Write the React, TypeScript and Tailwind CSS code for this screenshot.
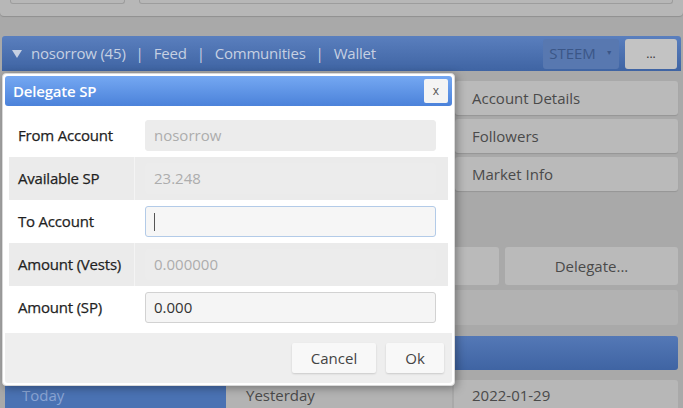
import React from 'react';

const font = { fontFamily: '"Open Sans", "Noto Sans", sans-serif' };

function SideButton({ label }: { label: string }) {
  return (
    <div className="flex h-[34px] items-center rounded-[3px] bg-[#bababa] px-[17px] text-[15px] text-[#4a4a4a] shadow-[0_1px_1px_rgba(0,0,0,0.12)]">
      {label}
    </div>
  );
}

function Row({
  label,
  value,
  shade,
  kind,
}: {
  label: string;
  value: string;
  shade?: boolean;
  kind: 'disabled' | 'focus' | 'normal';
}) {
  const input =
    kind === 'disabled'
      ? 'bg-[#ececec] text-[#adadad] border-[#ececec]'
      : kind === 'focus'
        ? 'bg-[#f6f6f6] text-[#333] border-[#b3cbe8]'
        : 'bg-[#f5f5f5] text-[#333] border-[#d2d2d2]';
  return (
    <div className={`grid grid-cols-[126px_1fr] ${shade ? 'bg-[#ebebeb]' : 'bg-white'}`}>
      <div className={`flex items-center pl-[9px] text-[15px] tracking-[-0.2px] text-[#1f1f1f] [-webkit-text-stroke:0.25px_#1f1f1f] ${shade ? 'border-r border-[#f4f4f4]' : ''}`}>
        {label}
      </div>
      <div className="py-[6px] pl-[10px] pr-[12px]">
        <div className={`flex h-[31px] items-center rounded-[3px] border px-[8px] text-[15px] ${input}`}>
          {kind === 'focus' ? <span className="h-[18px] w-px bg-[#555]" /> : value}
        </div>
      </div>
    </div>
  );
}

export default function App() {
  return (
    <div style={font} className="relative h-[408px] w-[683px] overflow-hidden bg-[#a9a9a9]">
      {/* page behind the dialog */}
      <div className="h-[16px] rounded-b-[4px] bg-[#b7b7b7] px-[3px] shadow-[0_1px_1px_rgba(0,0,0,0.15)]">
        <div className="flex h-[4px] gap-[14px] px-[7px]">
          <div className="w-[115px] rounded-b-[3px] border border-t-0 border-[#9d9d9d]" />
          <div className="flex-1 rounded-b-[3px] border border-t-0 border-[#9d9d9d]" />
        </div>
      </div>

      <div className="mx-[2px] mt-[20px] flex h-[35px] items-center justify-between rounded-t-[3px] bg-gradient-to-b from-[#5a7fbe] to-[#3f64a3] pl-[10px] pr-[4px]">
        <div className="flex items-center gap-[10px] text-[15px] tracking-[-0.2px] text-[#c6d0e2]">
          <span className="h-0 w-0 border-x-[5px] border-t-[8px] border-x-transparent border-t-[#c6d0e2]" />
          <span className="-ml-[1px]">nosorrow (45)</span>
          <span>|</span>
          <span>Feed</span>
          <span>|</span>
          <span>Communities</span>
          <span>|</span>
          <span>Wallet</span>
        </div>
        <div className="flex items-center gap-[6px]">
          <div className="flex h-[30px] w-[76px] items-center justify-center gap-[10px] rounded-[3px] bg-[#5878b0] text-[15px] text-[#3b5687]">
            <span>STEEM</span>
            <span className="text-[7px]">▼</span>
          </div>
          <div className="flex h-[30px] w-[52px] items-center justify-center rounded-[3px] bg-[#c3c3c3] text-[12px] text-[#333]">
            ...
          </div>
        </div>
      </div>

      <div className="grid grid-cols-[1fr_223px] gap-[6px] pl-[6px] pr-[5px]">
        <div />
        <div className="flex flex-col gap-[4px] pt-[10px]">
          <SideButton label="Account Details" />
          <SideButton label="Followers" />
          <SideButton label="Market Info" />
        </div>
      </div>

      <div className="mt-[56px] flex h-[38px] gap-[6px] px-[5px]">
        <div className="flex-1 rounded-[3px] bg-[#bababa]" />
        <div className="flex w-[173px] items-center justify-center rounded-[3px] bg-[#bababa] text-[15px] text-[#4a4a4a]">
          Delegate...
        </div>
      </div>

      <div className="mx-[5px] mt-[5px] h-[35px] rounded-[3px] bg-[#b2b2b2]" />

      <div className="mx-[5px] mt-[11px] h-[34px] rounded-[3px] bg-gradient-to-b from-[#5478b6] to-[#3f64a3]" />

      <div className="mx-[5px] mt-[10px] grid h-[30px] grid-cols-[221px_226px_1fr] gap-0 text-[15px]">
        <div className="flex items-center bg-[#4a72b3] pl-[17px] text-[#8aa5d4]">Today</div>
        <div className="flex items-center bg-[#b3b3b3] pl-[20px] text-[#4a4a4a]">Yesterday</div>
        <div className="ml-[2px] flex items-center rounded-t-[3px] bg-[#b7b7b7] pl-[18px] text-[#4a4a4a]">2022-01-29</div>
      </div>

      {/* dialog */}
      <div className="absolute left-[2px] top-[73px] w-[453px] rounded-[4px] border border-[#d9d9d9] bg-white p-[2px] shadow-[2px_2px_10px_rgba(0,0,0,0.35)]">
        <div className="flex h-[30px] items-center justify-between rounded-[3px] bg-gradient-to-b from-[#75a8f2] to-[#4b82da] pl-[8px] pr-[4px]">
          <span className="text-[15px] font-semibold tracking-[-0.2px] text-white">Delegate SP</span>
          <div className="flex h-[24px] w-[24px] items-center justify-center rounded-[2px] bg-[#f4f4f4] text-[12px] text-[#555]">
            x
          </div>
        </div>
        <div className="mx-[4px] mt-[8px] flex flex-col">
          <Row label="From Account" value="nosorrow" kind="disabled" />
          <Row label="Available SP" value="23.248" kind="disabled" shade />
          <Row label="To Account" value="" kind="focus" />
          <Row label="Amount (Vests)" value="0.000000" kind="disabled" shade />
          <Row label="Amount (SP)" value="0.000" kind="normal" />
        </div>
        <div className="mt-[4px] flex h-[50px] items-center justify-end gap-[10px] rounded-b-[3px] bg-[#eeeeee] pr-[8px]">
          <div className="flex h-[30px] w-[84px] items-center justify-center rounded-[2px] bg-[#f8f8f8] text-[15px] text-[#444] shadow-[0_1px_2px_rgba(0,0,0,0.15)]">
            Cancel
          </div>
          <div className="flex h-[30px] w-[58px] items-center justify-center rounded-[2px] bg-[#f8f8f8] text-[15px] text-[#444] shadow-[0_1px_2px_rgba(0,0,0,0.15)]">
            Ok
          </div>
        </div>
      </div>
    </div>
  );
}
